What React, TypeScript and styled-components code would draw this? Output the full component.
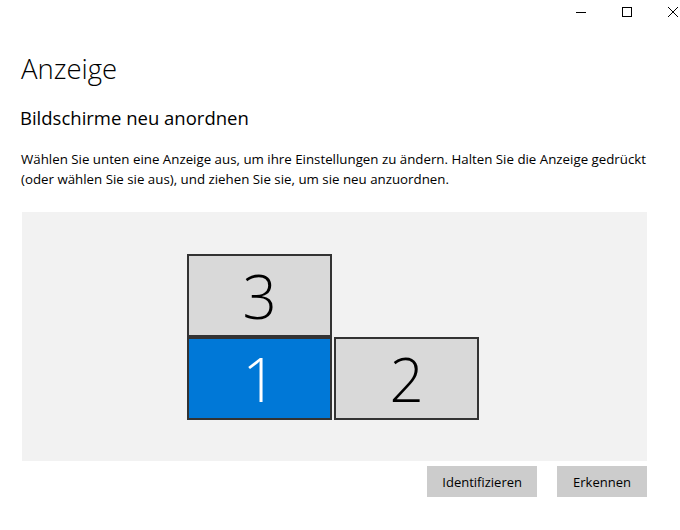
import React from "react";
import styled, { createGlobalStyle } from "styled-components";

type Monitor = { id: number; x: number; y: number };

const monitors: Monitor[] = [
  { id: 3, x: 165, y: 42 },
  { id: 1, x: 165, y: 125 },
  { id: 2, x: 312, y: 125 },
];

const App = () => {
  const [selected, setSelected] = React.useState<number>(1);

  return (
    <Window>
      <GlobalStyle />
      <TitleBar>
        <Controls>
          <CtrlButton aria-label="Minimieren">
            <svg width="10" height="10" viewBox="0 0 10 10">
              <path d="M0 5.5h10" stroke="#000" strokeWidth="1" />
            </svg>
          </CtrlButton>
          <CtrlButton aria-label="Maximieren">
            <svg width="10" height="10" viewBox="0 0 10 10">
              <rect x="0.5" y="0.5" width="9" height="9" fill="none" stroke="#000" />
            </svg>
          </CtrlButton>
          <CtrlButton aria-label="Schließen">
            <svg width="10" height="10" viewBox="0 0 10 10">
              <path d="M0 0l10 10M10 0L0 10" stroke="#000" strokeWidth="1" />
            </svg>
          </CtrlButton>
        </Controls>
      </TitleBar>
      <Content>
        <Title>Anzeige</Title>
        <Subtitle>Bildschirme neu anordnen</Subtitle>
        <Description>
          Wählen Sie unten eine Anzeige aus, um ihre Einstellungen zu ändern. Halten Sie die Anzeige gedrückt
          (oder wählen Sie sie aus), und ziehen Sie sie, um sie neu anzuordnen.
        </Description>
        <Canvas>
          {monitors.map((m) => (
            <Screen
              key={m.id}
              $active={selected === m.id}
              style={{ left: m.x, top: m.y }}
              onClick={() => setSelected(m.id)}
            >
              {m.id}
            </Screen>
          ))}
        </Canvas>
        <Actions>
          <ActionButton>Identifizieren</ActionButton>
          <ActionButton>Erkennen</ActionButton>
        </Actions>
      </Content>
    </Window>
  );
};

export default App;

const GlobalStyle = createGlobalStyle`
  html, body {
    margin: 0;
    padding: 0;
    background: #fff;
  }
  body {
    font-family: "Open Sans", "Noto Sans", sans-serif;
    color: #000;
  }
`;

const Window = styled.div`
  width: 680px;
  height: 530px;
  overflow: hidden;
  background: #fff;
`;

const TitleBar = styled.div`
  height: 28px;
  display: flex;
  justify-content: flex-end;
`;

const Controls = styled.div`
  display: flex;
  margin-right: -16px;
`;

const CtrlButton = styled.button`
  width: 46px;
  height: 28px;
  border: none;
  background: transparent;
  display: flex;
  align-items: center;
  justify-content: center;
  padding: 0;
  margin-top: -2px;
`;

const Content = styled.div`
  padding: 0 33px 0 21px;
  display: flex;
  flex-direction: column;
`;

const Title = styled.h1`
  margin: 23px 0 0 0;
  font-size: 27.5px;
  font-weight: 300;
  line-height: 36px;
`;

const Subtitle = styled.h2`
  margin: 18px 0 0 -1px;
  font-size: 18.5px;
  font-weight: 400;
  line-height: 26px;
`;

const Description = styled.p`
  margin: 18px 0 0 0;
  font-size: 13.3px;
  line-height: 20px;
`;

const Canvas = styled.div`
  position: relative;
  margin: 23px 0 0 1px;
  height: 249px;
  background: #f2f2f2;
`;

const Screen = styled.div<{ $active: boolean }>`
  position: absolute;
  box-sizing: border-box;
  width: 145px;
  height: 83px;
  border: 2px solid #333;
  background: ${({ $active }) => ($active ? "#0078d7" : "#d9d9d9")};
  color: ${({ $active }) => ($active ? "#fff" : "#000")};
  display: flex;
  align-items: center;
  justify-content: center;
  font-size: 60px;
  font-weight: 300;
  cursor: pointer;
`;

const Actions = styled.div`
  display: flex;
  justify-content: flex-end;
  gap: 20px;
  margin-top: 5px;
`;

const ActionButton = styled.button`
  height: 31px;
  min-width: 90px;
  padding: 0 15px;
  border: none;
  background: #cccccc;
  font-family: "Open Sans", "Noto Sans", sans-serif;
  font-size: 13px;
  color: #000;
`;
